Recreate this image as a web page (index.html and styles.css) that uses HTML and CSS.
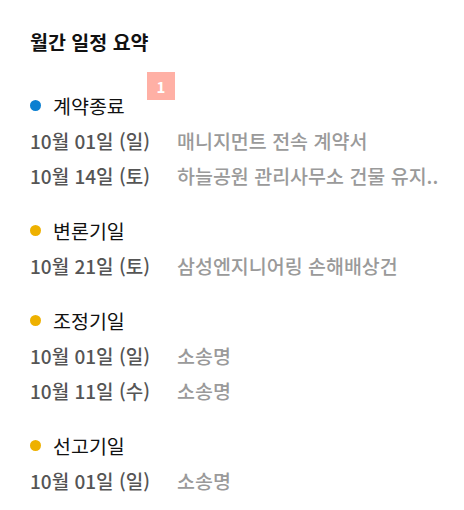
FILE: index.html
```html
<!DOCTYPE html>
<html lang="ko">
<head>
<meta charset="utf-8">
<link rel="stylesheet" href="styles.css">
</head>
<body>
<div class="summary">
  <h2 class="title">월간 일정 요약</h2>
  <div class="groups">
    <section class="group">
      <div class="cat"><span class="dot dot-blue"></span>계약종료</div>
      <span class="badge">1</span>
      <div class="row"><span class="date">10월 01일 (일)</span><span class="desc">매니지먼트 전속 계약서</span></div>
      <div class="row"><span class="date">10월 14일 (토)</span><span class="desc">하늘공원 관리사무소 건물 유지..</span></div>
    </section>
    <section class="group">
      <div class="cat"><span class="dot dot-yellow"></span>변론기일</div>
      <div class="row"><span class="date">10월 21일 (토)</span><span class="desc">삼성엔지니어링 손해배상건</span></div>
    </section>
    <section class="group">
      <div class="cat"><span class="dot dot-yellow"></span>조정기일</div>
      <div class="row"><span class="date">10월 01일 (일)</span><span class="desc">소송명</span></div>
      <div class="row"><span class="date">10월 11일 (수)</span><span class="desc">소송명</span></div>
    </section>
    <section class="group">
      <div class="cat"><span class="dot dot-yellow"></span>선고기일</div>
      <div class="row"><span class="date">10월 01일 (일)</span><span class="desc">소송명</span></div>
    </section>
  </div>
</div>
</body>
</html>
```
FILE: styles.css
```css
html, body {
  margin: 0;
  padding: 0;
  background: #fff;
}
body {
  font-family: "Noto Sans CJK KR", "Noto Sans", sans-serif;
  width: 464px;
  height: 510px;
  overflow: hidden;
}
.summary {
  padding: 29px 30px 0 30px;
}
.title {
  margin: 0;
  font-size: 19.5px;
  font-weight: 700;
  color: #111;
  line-height: 26px;
}
.groups {
  display: flex;
  flex-direction: column;
  gap: 19px;
  margin-top: 32px;
}
.group {
  position: relative;
  display: flex;
  flex-direction: column;
}
.cat {
  display: flex;
  align-items: center;
  height: 36px;
  font-size: 19.5px;
  color: #111;
}
.dot {
  width: 11px;
  height: 11px;
  border-radius: 50%;
  margin-right: 12px;
  flex: none;
}
.dot-blue { background: #0a7fd1; }
.dot-yellow { background: #eeb100; }
.badge {
  position: absolute;
  left: 117px;
  top: -15px;
  width: 28px;
  height: 28px;
  background: #ffb0a5;
  color: #fff;
  font-size: 15px;
  font-weight: 700;
  display: flex;
  align-items: center;
  justify-content: center;
}
.row {
  display: flex;
  align-items: center;
  height: 35px;
  font-size: 19px;
  font-weight: 500;
}
.date {
  width: 147px;
  flex: none;
  color: #555;
}
.desc {
  color: #9a9a9a;
  font-size: 19.5px;
  white-space: nowrap;
}
```
